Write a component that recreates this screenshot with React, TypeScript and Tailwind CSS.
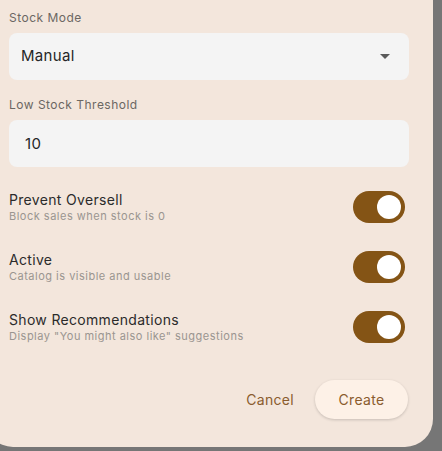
import React, { useState } from 'react';

interface ToggleRowProps {
  title: string;
  subtitle: string;
  checked: boolean;
  onToggle: () => void;
  className?: string;
}

const ToggleRow: React.FC<ToggleRowProps> = ({ title, subtitle, checked, onToggle, className }) => (
  <div className={`flex items-center justify-between h-[32px] pr-[4px] ${className ?? ''}`}>
    <div className="flex flex-col">
      <span className="text-[14px] leading-[18px] text-[#2b2b2b]">{title}</span>
      <span className="text-[11px] leading-[14px] tracking-[0.045em] text-[#9a9590]">{subtitle}</span>
    </div>
    <button
      onClick={onToggle}
      className={`relative w-[52px] h-[32px] rounded-full transition-colors ${checked ? 'bg-[#845415]' : 'bg-[#d9cfc6]'}`}
    >
      <span
        className={`absolute top-[4px] w-[24px] h-[24px] rounded-full bg-white transition-all ${checked ? 'left-[24px]' : 'left-[4px]'}`}
      />
    </button>
  </div>
);

const App: React.FC = () => {
  const [threshold, setThreshold] = useState('10');
  const [oversell, setOversell] = useState(true);
  const [active, setActive] = useState(true);
  const [recs, setRecs] = useState(true);

  return (
    <div
      className="w-[442px] h-[451px] bg-[#767676] overflow-hidden"
      style={{ fontFamily: 'Inter, "Noto Sans", sans-serif' }}
    >
      <div className="ml-[-15px] w-[448px] h-[447px] bg-[#f3e6dc] rounded-b-[28px] px-6 pt-[10px] flex flex-col tracking-[0.02em]">
        <label className="text-[12px] leading-[16px] tracking-[0.04em] text-[#6b6763]">Stock Mode</label>
        <div className="mt-[7px] h-[47px] rounded-[8px] bg-[#f4f4f4] flex items-center justify-between pl-3 pr-[19px]">
          <span className="text-[15px] text-[#262626]">Manual</span>
          <svg width="10" height="5" viewBox="0 0 10 5">
            <path d="M0 0 L10 0 L5 5 Z" fill="#5a5a5a" />
          </svg>
        </div>

        <label className="mt-[17px] text-[12px] leading-[16px] tracking-[0.04em] text-[#6b6763]">Low Stock Threshold</label>
        <input
          value={threshold}
          onChange={(e) => setThreshold(e.target.value)}
          className="mt-[7px] h-[47px] rounded-[8px] bg-[#f4f4f4] pl-4 text-[15px] text-[#262626] outline-none"
        />

        <ToggleRow className="mt-[24px]" title="Prevent Oversell" subtitle="Block sales when stock is 0" checked={oversell} onToggle={() => setOversell(!oversell)} />
        <ToggleRow className="mt-[28px]" title="Active" subtitle="Catalog is visible and usable" checked={active} onToggle={() => setActive(!active)} />
        <ToggleRow className="mt-[28px]" title="Show Recommendations" subtitle={'Display "You might also like" suggestions'} checked={recs} onToggle={() => setRecs(!recs)} />

        <div className="mt-[37px] mr-[1px] flex justify-end items-center gap-[9px]">
          <button className="h-[39px] px-3 text-[14px] text-[#8a5c2e]">Cancel</button>
          <button className="h-[39px] w-[93px] rounded-full bg-[#fdf1e7] text-[14px] text-[#8a5c2e] shadow-[0_1px_3px_rgba(0,0,0,0.18)]">
            Create
          </button>
        </div>
      </div>
    </div>
  );
};

export default App;
